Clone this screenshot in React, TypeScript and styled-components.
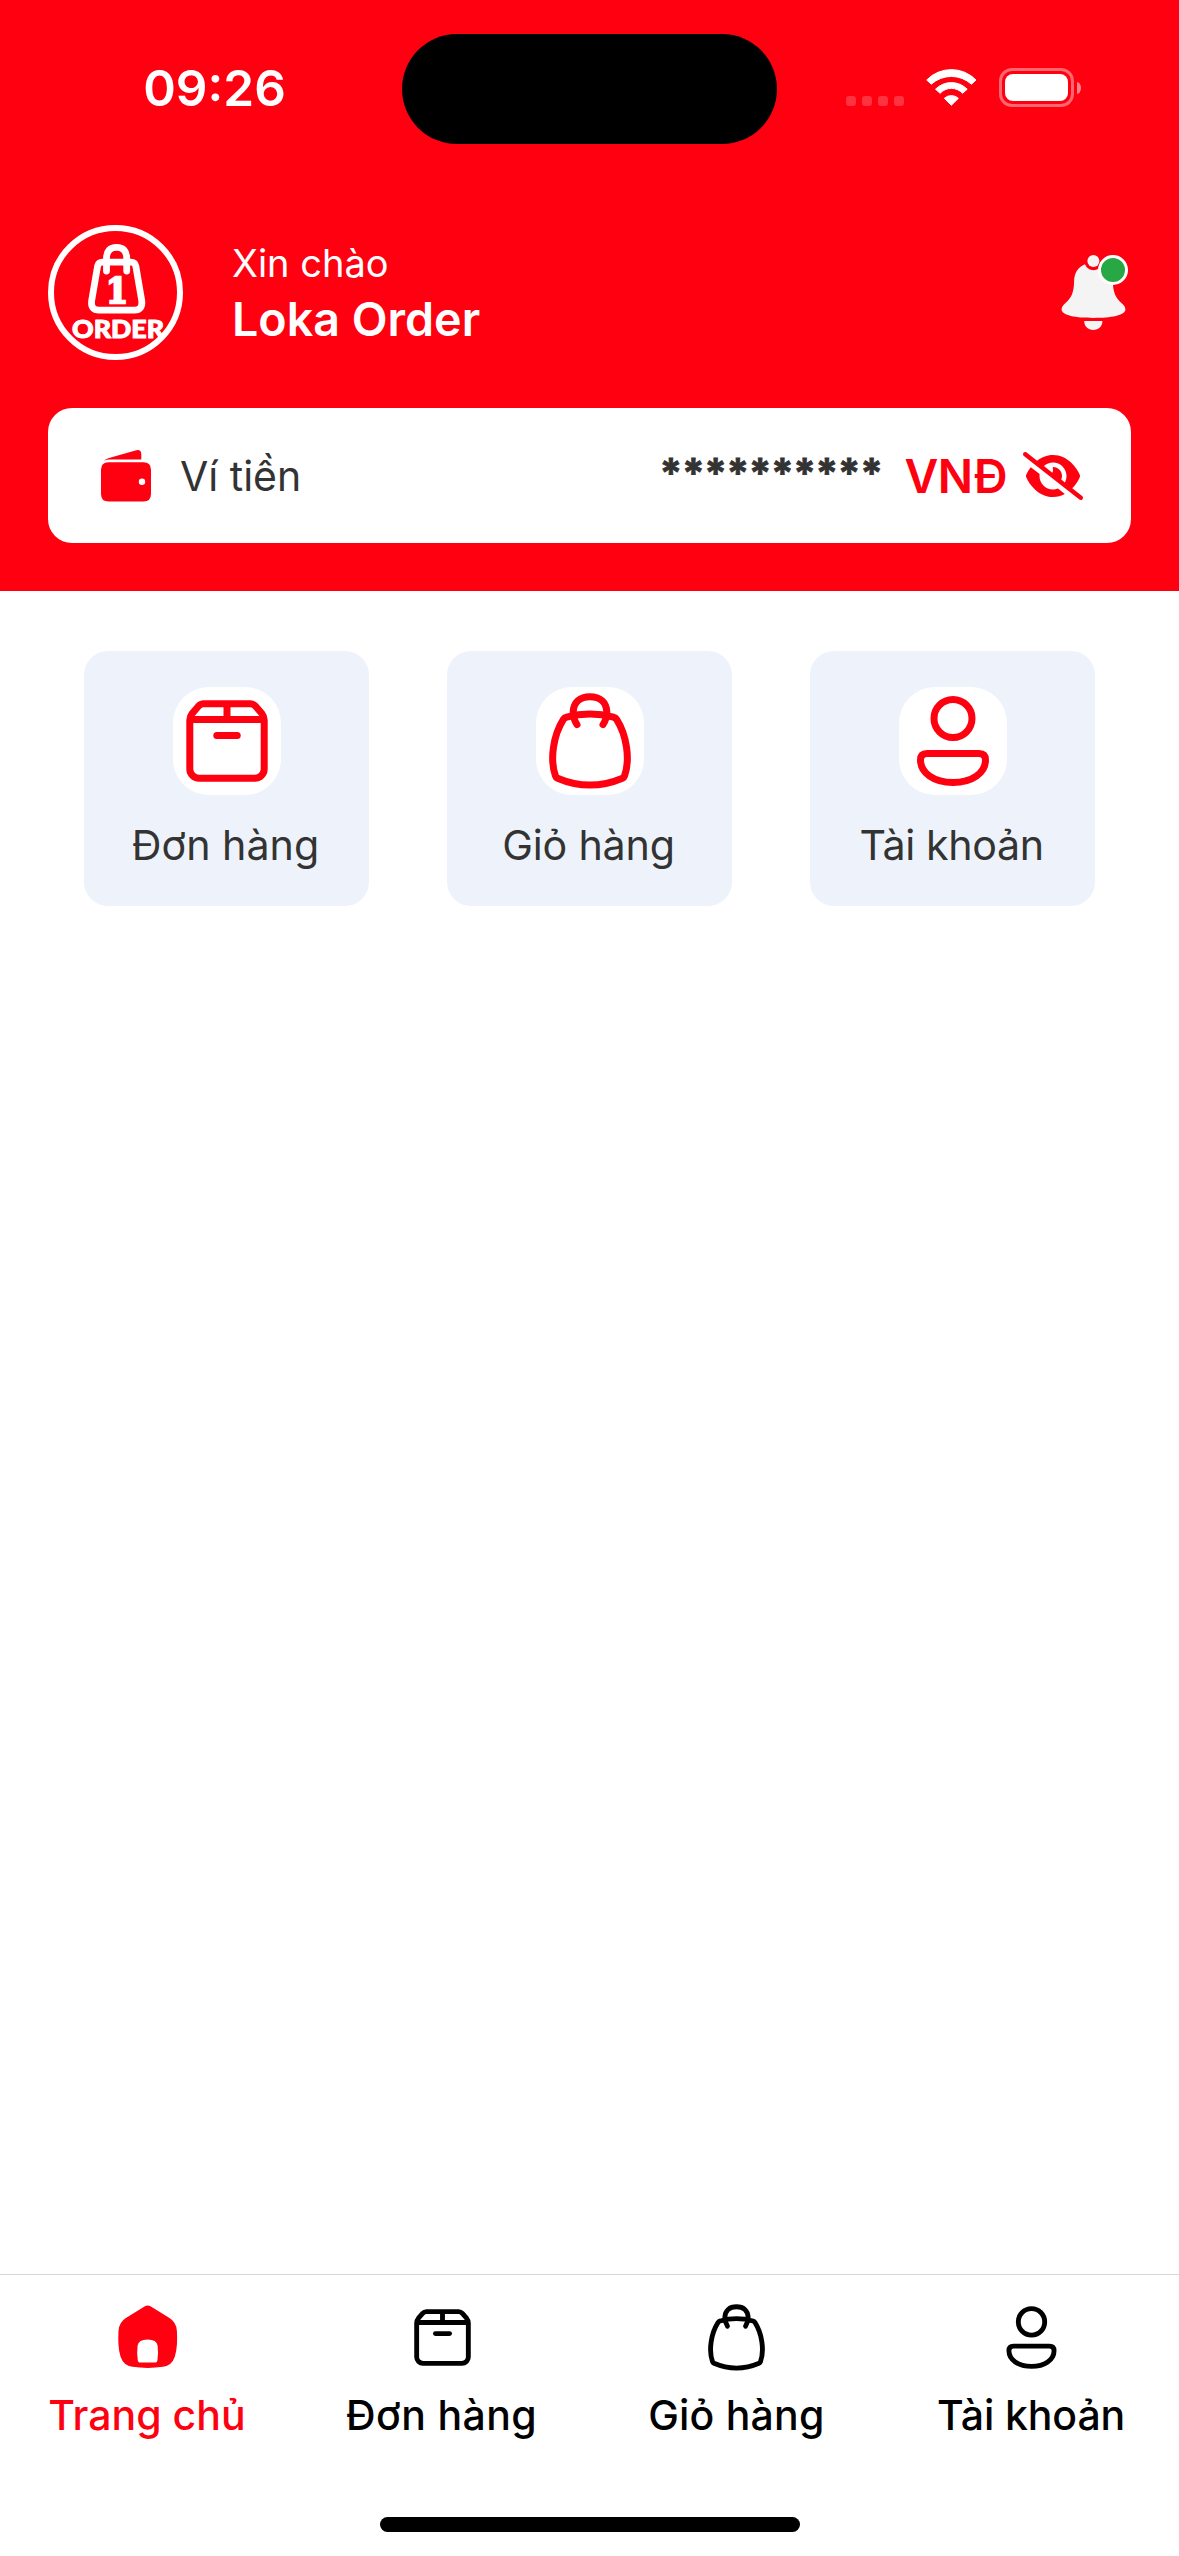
import React from 'react';
import styled, { createGlobalStyle } from 'styled-components';
import { FaEyeSlash } from 'react-icons/fa6';

const RED = '#ff0011';
const INK = '#333333';

const GlobalStyle = createGlobalStyle`
  *, *::before, *::after { box-sizing: border-box; }
  body {
    margin: 0;
    background: #ffffff;
    font-family: Inter, "Noto Sans", sans-serif;
  }
  svg { display: block; flex: none; }
`;

const Screen = styled.div`
  display: flex;
  flex-direction: column;
  width: 1179px;
  height: 2556px;
  background: #ffffff;
  overflow: hidden;
`;

const Header = styled.header`
  height: 591px;
  background: ${RED};
  color: #ffffff;
`;

const StatusBar = styled.div`
  display: grid;
  grid-template-columns: 402px 375px 1fr;
  align-items: start;
  height: 177px;
  padding-top: 34px;
`;

const Clock = styled.div`
  padding-left: 27px;
  line-height: 108px;
  font-size: 49.5px;
  font-weight: 600;
  text-align: center;
`;

const Island = styled.div`
  height: 110px;
  border-radius: 55px;
  background: #000000;
`;

const StatusIcons = styled.div`
  display: flex;
  align-items: center;
  height: 107px;
  padding-left: 69px;
`;

const SignalDots = styled.div`
  display: flex;
  gap: 6px;
  margin-top: 27px;
`;

const Dot = styled.span`
  width: 10px;
  height: 10px;
  border-radius: 3px;
  background: rgba(255, 255, 255, 0.2);
`;

const WifiSlot = styled.div`
  margin: 0 21px 0 21px;
`;

const Battery = styled.div`
  width: 75px;
  height: 39px;
  padding: 3px;
  border: 3px solid rgba(255, 255, 255, 0.4);
  border-radius: 13px;
`;

const BatteryFill = styled.div`
  height: 27px;
  border-radius: 8px;
  background: #ffffff;
`;

const BatteryCap = styled.div`
  width: 4px;
  height: 12px;
  margin-left: 3px;
  border-radius: 0 4px 4px 0 / 0 6px 6px 0;
  background: rgba(255, 255, 255, 0.5);
`;

const Profile = styled.div`
  display: flex;
  align-items: center;
  margin: 48px 48px 48px;
  height: 135px;
`;

const Greeting = styled.div`
  flex: 1;
  padding: 1px 0 0 49px;
`;

const Hello = styled.div`
  font-size: 38px;
  line-height: 52px;
`;

const UserName = styled.div`
  font-size: 46.6px;
  font-weight: 600;
  line-height: 60px;
`;

const BellButton = styled.div`
  position: relative;
  width: 72px;
  height: 75px;
`;

const BellBadge = styled.span`
  position: absolute;
  top: 0;
  right: 3px;
  width: 30px;
  height: 30px;
  border: 3px solid #ffffff;
  border-radius: 50%;
  background: #28a745;
`;

const WalletCard = styled.section`
  display: flex;
  align-items: center;
  height: 135px;
  margin: 0 48px;
  padding: 0 48px;
  border-radius: 24px;
  background: #ffffff;
  color: ${INK};
`;

const WalletLabel = styled.div`
  flex: 1;
  padding-left: 24px;
  font-size: 41px;
  line-height: 60px;
`;

const Mask = styled.div`
  padding-right: 22px;
  font-size: 40.75px;
  font-weight: 700;
  line-height: 60px;
  margin-bottom: 3px;
  letter-spacing: -0.5px;
  -webkit-text-stroke: 0.8px ${INK};
`;

const Currency = styled.div`
  margin-right: 16px;
  color: ${RED};
  font-size: 46.5px;
  font-weight: 600;
  line-height: 60px;
  letter-spacing: -0.6px;
`;

const HiddenEye = styled(FaEyeSlash)`
  width: 60px;
  height: 48px;
  margin-top: 1px;
  color: ${RED};
`;

const Shortcuts = styled.main`
  flex: 1;
  display: flex;
  align-items: flex-start;
  gap: 78px;
  padding: 60px 84px;
`;

const Shortcut = styled.div`
  display: flex;
  flex-direction: column;
  align-items: center;
  width: 285px;
  height: 255px;
  padding-top: 36px;
  border-radius: 24px;
  background: #eef3fb;
`;

const ShortcutTile = styled.div`
  width: 108px;
  height: 108px;
  border-radius: 36px;
  background: #ffffff;
  color: ${RED};
`;

const ShortcutLabel = styled.div<{ $tracking: number }>`
  margin-top: 18px;
  padding-right: 2px;
  color: ${INK};
  font-size: 41.2px;
  line-height: 64px;
  letter-spacing: ${(p) => p.$tracking}px;
  white-space: nowrap;
`;

const TabBar = styled.nav`
  display: grid;
  grid-template-columns: repeat(4, 1fr);
  height: 282px;
  padding-top: 25px;
  border-top: 1px solid #d8d8d8;
  align-content: start;
`;

const Tab = styled.div<{ $active?: boolean }>`
  display: flex;
  flex-direction: column;
  align-items: center;
  color: ${(p) => (p.$active ? RED : '#000000')};
`;

const TabLabel = styled.div<{ $tracking: number }>`
  margin-top: 10px;
  padding-right: 1px;
  font-size: 41px;
  font-weight: 500;
  line-height: 60px;
  letter-spacing: ${(p) => p.$tracking}px;
  white-space: nowrap;
`;

const HomeIndicator = styled.div`
  grid-column: 1 / -1;
  justify-self: center;
  width: 420px;
  height: 15px;
  margin-top: 72px;
  border-radius: 8px;
  background: #000000;
`;

const strokeProps = {
  fill: 'none',
  stroke: 'currentColor',
  strokeWidth: 7,
  strokeLinecap: 'round' as const,
  strokeLinejoin: 'round' as const,
};

type IconProps = { size: number };

function BoxIcon({ size }: IconProps) {
  return (
    <svg width={size} height={size} viewBox="0 0 108 108" {...strokeProps}>
      <path d="M16.8 33V82a9.2 9.2 0 0 0 9.2 9.2H82a9.2 9.2 0 0 0 9.2-9.2V33c0-3-.8-4.5-2.6-6.8l-6-6.9q-2.2-2.5-5.4-2.5H30.8q-3.2 0-5.4 2.5l-6 6.9c-1.8 2.3-2.6 3.8-2.6 6.8Z" />
      <path d="M18 32.4H90M54 17V32" strokeLinecap="butt" />
      <path d="M43.8 48.4H64.2" />
    </svg>
  );
}

function BagIcon({ size }: IconProps) {
  return (
    <svg width={size} height={size} viewBox="0 0 108 108" {...strokeProps}>
      <path d="M30.5 30.2Q54 23.6 77.5 30.2Q79.5 30.6 80.6 32.4C90.5 48 94.500 72 88.500 89Q88 90.600 86.500 91.200Q54 105 21.500 91.200Q20 90.600 19.500 89C13.500 72 17.5 48 27.4 32.4Q28.5 30.6 30.5 30.2Z" />
      <path d="M41 37.6C38 33 37 29 37.2 25C37.6 15 44 9.8 54 9.8S70.4 15 70.8 25C71 29 70 33 67 37.6" />
    </svg>
  );
}

function UserIcon({ size }: IconProps) {
  return (
    <svg width={size} height={size} viewBox="0 0 108 108" {...strokeProps}>
      <circle cx="54" cy="31.5" r="19" />
      <path d="M28 66.5H80q6.5 0 6.5 6.5C86.5 86 73 95.5 54 95.5S21.5 86 21.5 73q0-6.5 6.5-6.5Z" />
    </svg>
  );
}

function HomeIcon({ size }: IconProps) {
  return (
    <svg width={size} height={size} viewBox="0 0 75 75" fill="currentColor" fillRule="evenodd">
      <path d="M34.5 6.6Q37.7 4.4 40.9 6.6L59.5 18.1Q66.5 22.5 66.9 31C67.4 40 67.2 49 64.9 56.5Q62 65.5 53 66.8Q37.7 69 22.4 66.8Q13.4 65.5 10.5 56.5C8.2 49 8 40 8.500 31Q8.9 22.5 15.9 18.1ZM29.5 62.6H45.7Q47 62.6 47.4 60.5Q48.6 53 47.6 45.5Q46.6 39.4 37.6 39.4T27.6 45.5Q26.6 53 27.8 60.5Q28.2 62.6 29.5 62.6Z" />
    </svg>
  );
}

function BrandLogo() {
  return (
    <svg width="135" height="135" viewBox="0 0 135 135" fill="none" stroke="#fff">
      <circle cx="67.5" cy="67.5" r="64.5" strokeWidth="6" />
      <g strokeWidth="6.8" strokeLinecap="round" strokeLinejoin="round">
        <path d="M54.5 37.2H83Q87 37.2 87.8 41L93.8 76Q94.6 85.2 86.5 85.2H51Q42.6 85.2 43.6 76L49.6 41Q50.4 37.2 54.5 37.2Z" />
        <path d="M58.5 46V33C58.5 26 62 22.4 68.6 22.4S78.7 26 78.7 33V46" />
      </g>
      <text
        x="69"
        y="77.5"
        fill="#fff"
        strokeWidth="2.4"
        textAnchor="middle"
        fontFamily="'DejaVu Serif', serif"
        fontWeight="700"
        fontSize="36"
        textLength="22"
        lengthAdjust="spacingAndGlyphs"
      >
        1
      </text>
      <text
        x="24"
        y="113.3"
        fill="#fff"
        strokeWidth="1"
        strokeLinejoin="round"
        fontFamily="Lato, sans-serif"
        fontWeight="900"
        fontSize="25"
        textLength="92"
        lengthAdjust="spacingAndGlyphs"
      >
        ORDER
      </text>
    </svg>
  );
}

function BellIcon() {
  return (
    <svg width="72" height="75" viewBox="0 0 72 75" fill="#f4f4f4">
      <circle cx="34.4" cy="6" r="6" />
      <path d="M26 9.3C27.5 13 30.5 15.2 34.4 15.2S41.3 13 42.8 9.3C50 12.5 53.6 18 53.8 26C54 38 57 43.5 63 48.5C65.3 50.5 66.4 52.5 66.4 54.6C66.4 60.5 52 63 34.5 63S2.6 60.5 2.6 54.6C2.6 52.5 3.7 50.5 6 48.5C12 43.5 15 38 15.1 26C15.3 18 18.8 12.5 26 9.3Z" />
      <path d="M25.2 66H43.4C43.4 71.5 39.5 75 34.3 75S25.2 71.5 25.2 66Z" />
    </svg>
  );
}

function WalletIcon() {
  return (
    <svg width="60" height="60" viewBox="0 0 60 60" fill={RED} fillRule="evenodd">
      <path d="M8 14.8Q9.5 13 13 12L39.5 4.4Q45.3 3 45.3 8.5V13.5H14Q10.5 13.5 8 14.8Z" />
      <path d="M12.5 16.2H47.5Q55 16.2 55 23.7V48Q55 55.5 47.5 55.5H12.5Q5 55.5 5 48V23.7Q5 16.2 12.5 16.2ZM46 32.6a3.2 3.2 0 1 0 0 6.4a3.2 3.2 0 0 0 0-6.4Z" />
    </svg>
  );
}

function WifiIcon() {
  return (
    <svg width="53" height="39" viewBox="0 0 53 39" fill="#fff" stroke="#fff" strokeWidth="1" strokeLinejoin="round">
      <path d="M1.7 12A34.4 34.4 0 0 1 51 12L46.4 16.2A29.8 29.8 0 0 0 6.3 16.2Z" />
      <path d="M10.5 21.2A22.3 22.3 0 0 1 42.2 21.2L37.6 25.3A15.3 15.3 0 0 0 15.1 25.3Z" />
      <path d="M19.3 30.3A10.5 10.5 0 0 1 33.4 30.3L26.3 37.3Z" />
    </svg>
  );
}

const shortcuts = [
  { label: 'Đơn hàng', tracking: 0, Icon: BoxIcon },
  { label: 'Giỏ hàng', tracking: -0.2, Icon: BagIcon },
  { label: 'Tài khoản', tracking: -0.4, Icon: UserIcon },
];

const tabs = [
  { label: 'Trang chủ', tracking: 0, Icon: HomeIcon, active: true },
  { label: 'Đơn hàng', tracking: 0.4, Icon: BoxIcon },
  { label: 'Giỏ hàng', tracking: 0.2, Icon: BagIcon },
  { label: 'Tài khoản', tracking: -0.1, Icon: UserIcon },
];

export default function App() {
  return (
    <>
      <GlobalStyle />
      <Screen>
        <Header>
          <StatusBar>
            <Clock>09:26</Clock>
            <Island />
            <StatusIcons>
              <SignalDots>
                <Dot />
                <Dot />
                <Dot />
                <Dot />
              </SignalDots>
              <WifiSlot>
                <WifiIcon />
              </WifiSlot>
              <Battery>
                <BatteryFill />
              </Battery>
              <BatteryCap />
            </StatusIcons>
          </StatusBar>
          <Profile>
            <BrandLogo />
            <Greeting>
              <Hello>Xin chào</Hello>
              <UserName>Loka Order</UserName>
            </Greeting>
            <BellButton>
              <BellIcon />
              <BellBadge />
            </BellButton>
          </Profile>
          <WalletCard>
            <WalletIcon />
            <WalletLabel>Ví tiền</WalletLabel>
            <Mask>**********</Mask>
            <Currency>VNĐ</Currency>
            <HiddenEye />
          </WalletCard>
        </Header>
        <Shortcuts>
          {shortcuts.map(({ label, tracking, Icon }) => (
            <Shortcut key={label}>
              <ShortcutTile>
                <Icon size={108} />
              </ShortcutTile>
              <ShortcutLabel $tracking={tracking}>{label}</ShortcutLabel>
            </Shortcut>
          ))}
        </Shortcuts>
        <TabBar>
          {tabs.map(({ label, tracking, Icon, active }) => (
            <Tab key={label} $active={active}>
              <Icon size={75} />
              <TabLabel $tracking={tracking}>{label}</TabLabel>
            </Tab>
          ))}
          <HomeIndicator />
        </TabBar>
      </Screen>
    </>
  );
}
